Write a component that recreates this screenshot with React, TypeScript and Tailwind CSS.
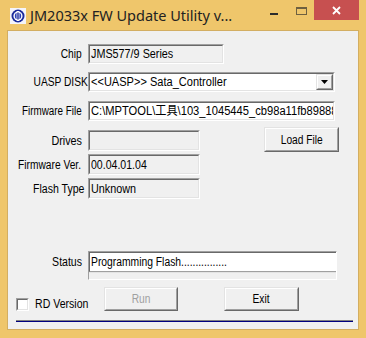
import React from "react";

function NL({ children, s = "scale-x-[0.9]" }: { children: React.ReactNode; s?: string }) {
  return <span className={`inline-block whitespace-nowrap ${s} origin-left`}>{children}</span>;
}
function NR({ children, s = "scale-x-[0.85]" }: { children: React.ReactNode; s?: string }) {
  return <span className={`inline-block whitespace-nowrap ${s} origin-right`}>{children}</span>;
}
function NC({ children }: { children: React.ReactNode }) {
  return <span className="inline-block whitespace-nowrap scale-x-[0.85] origin-center">{children}</span>;
}

function Label({ className, children, s }: { className: string; children: React.ReactNode; s?: string }) {
  return (
    <div className={`${className} flex justify-end shrink-0`}>
      <NR s={s}>{children}</NR>
    </div>
  );
}

function Sunken({ className, bg, children }: { className: string; bg: string; children?: React.ReactNode }) {
  return (
    <div className={`${className} border border-t-[#a0a0a0] border-l-[#a0a0a0] border-r-white border-b-white flex`}>
      <div className={`flex-1 min-w-0 border border-t-[#696969] border-l-[#696969] border-r-[#e3e3e3] border-b-[#e3e3e3] ${bg} flex items-center overflow-hidden whitespace-nowrap pl-[1px]`}>
        {children}
      </div>
    </div>
  );
}

function Raised({ className, children, disabled }: { className: string; children?: React.ReactNode; disabled?: boolean }) {
  return (
    <div className={`${className} border border-t-[#e3e3e3] border-l-[#e3e3e3] border-r-[#696969] border-b-[#696969] flex`}>
      <div className={`flex-1 border border-t-white border-l-white border-r-[#a0a0a0] border-b-[#a0a0a0] bg-[#f0f0f0] flex items-center justify-center ${disabled ? "text-[#a0a0a0]" : "text-black"}`}>
        {children}
      </div>
    </div>
  );
}

export default function App() {
  return (
    <div className="w-[366px] h-[338px] bg-[#efc66b] flex flex-col overflow-hidden">
      {/* title bar */}
      <div className="h-[30px] flex items-start relative">
        <div className="ml-[10px] mt-[8px] w-[16px] h-[16px]">
          <svg width="16" height="16" viewBox="0 0 16 16">
            <rect x="0" y="0" width="16" height="16" fill="#f4f4fa" />
            <circle cx="8" cy="8" r="6.5" fill="#1a2a9a" />
            <circle cx="8" cy="8" r="4.6" fill="#ffffff" />
            <circle cx="8" cy="8" r="3.2" fill="#2a3fb5" />
            <rect x="6.6" y="3" width="2.8" height="10" fill="#ffffff" />
            <rect x="7.3" y="4.5" width="1.4" height="7" fill="#1a2a9a" />
          </svg>
        </div>
        <div className="ml-[4px] mt-[4px] text-[14.5px] leading-[22px] text-[#222] font-['Noto_Sans',sans-serif] whitespace-nowrap">
          JM2033x FW Update Utility v...
        </div>
        <div className="absolute left-[270px] top-[13px] w-[8px] h-[2px] bg-[#2c2c2c]" />
        <div className="absolute left-[296px] top-[7px] w-[11px] h-[8px] border border-[#6e6040] border-t-2" />
        <div className="absolute left-[314px] top-0 w-[45px] h-[20px] bg-[#c75050] flex items-center justify-center">
          <svg width="9" height="9" viewBox="0 0 9 9">
            <path d="M1 1 L8 8 M8 1 L1 8" stroke="#ffffff" strokeWidth="1.8" />
          </svg>
        </div>
      </div>
      {/* client */}
      <div className="ml-[7px] w-[352px] h-[300px] border border-[#d3ae62] bg-[#f0f0f0]">
        <div className="flex flex-col pl-[8px] pt-[13px] text-[12px] leading-[14px] text-black font-['Liberation_Sans','Noto_Sans_CJK_SC',sans-serif]">
          <div className="flex items-center h-[20px]">
            <Label className="w-[66px]">Chip</Label>
            <Sunken className="ml-[6px] w-[136px] h-[20px]" bg="bg-[#f0f0f0]"><NL>JMS577/9 Series</NL></Sunken>
          </div>
          <div className="flex items-center h-[20px] mt-[8px]">
            <Label className="w-[72px]">UASP DISK</Label>
            <Sunken className="w-[247px] h-[20px]" bg="bg-white">
              <span className="flex-1 min-w-0"><NL s="scale-x-[0.92]">&lt;&lt;UASP&gt;&gt; Sata_Controller</NL></span>
              <Raised className="w-[17px] h-[16px]">
                <svg width="7" height="4" viewBox="0 0 7 4">
                  <path d="M0 0 H7 L3.5 4 Z" fill="#000" />
                </svg>
              </Raised>
            </Sunken>
          </div>
          <div className="flex items-center h-[20px] mt-[9px]">
            <Label className="w-[66px]" s="scale-x-[0.82]">Firmware File</Label>
            <Sunken className="ml-[6px] w-[247px] h-[20px]" bg="bg-white">
              <NL s="scale-x-[0.93]">{"C:\\MPTOOL\\工具\\103_1045445_cb98a11fb89888"}</NL>
            </Sunken>
          </div>
          <div className="flex mt-[6px]">
            <div className="flex flex-col pt-[3px]">
              <div className="flex items-center h-[21px]">
                <Label className="w-[66px]" s="scale-x-[0.9]">Drives</Label>
                <Sunken className="ml-[6px] w-[112px] h-[21px]" bg="bg-[#f0f0f0]" />
              </div>
              <div className="flex items-center h-[21px] mt-[3px]">
                <Label className="w-[65px]">Firmware Ver.</Label>
                <Sunken className="ml-[7px] w-[112px] h-[21px]" bg="bg-[#f0f0f0]"><NL s="scale-x-[0.88]">00.04.01.04</NL></Sunken>
              </div>
              <div className="flex items-center h-[21px] mt-[3px]">
                <Label className="w-[68px]" s="scale-x-[0.88]">Flash Type</Label>
                <Sunken className="ml-[4px] w-[112px] h-[21px]" bg="bg-[#f0f0f0]"><NL>Unknown</NL></Sunken>
              </div>
            </div>
            <Raised className="ml-[64px] w-[75px] h-[25px]"><NC>Load File</NC></Raised>
          </div>
          <div className="flex items-start mt-[52px]">
            <Label className="w-[66px] mt-[4px]" s="scale-x-[0.88]">Status</Label>
            <div className="ml-[6px] w-[249px] h-[29px] border-t border-l border-t-[#a0a0a0] border-l-[#a0a0a0] border-b border-r border-b-white border-r-white flex flex-col">
              <div className="h-[20px] bg-white border-t border-l border-t-[#696969] border-l-[#696969] border-b border-b-[#a0a0a0] flex items-center pl-[1px] whitespace-nowrap overflow-hidden">
                <NL s="scale-x-[0.86]">Programming Flash................</NL>
              </div>
              <div className="flex-1 bg-[#f0f0f0] border-t border-t-[#e3e3e3]" />
            </div>
          </div>
          <div className="flex items-center mt-[7px] h-[24px]">
            <div className="w-[13px] h-[13px] mt-[10px] border border-t-[#a0a0a0] border-l-[#a0a0a0] border-r-white border-b-white">
              <div className="w-full h-full bg-white border border-t-[#696969] border-l-[#696969] border-r-[#e3e3e3] border-b-[#e3e3e3]" />
            </div>
            <div className="ml-[6px] mt-[10px] whitespace-nowrap w-[69px]"><NL s="scale-x-[0.88]">RD Version</NL></div>
            <Raised className="w-[74px] h-[24px]" disabled><NC>Run</NC></Raised>
            <Raised className="ml-[46px] w-[75px] h-[24px]"><NC>Exit</NC></Raised>
          </div>
          <div className="mt-[9px] w-[337px] h-[2px] border-t border-t-[#808080] bg-[#000080]" />
        </div>
      </div>
    </div>
  );
}
